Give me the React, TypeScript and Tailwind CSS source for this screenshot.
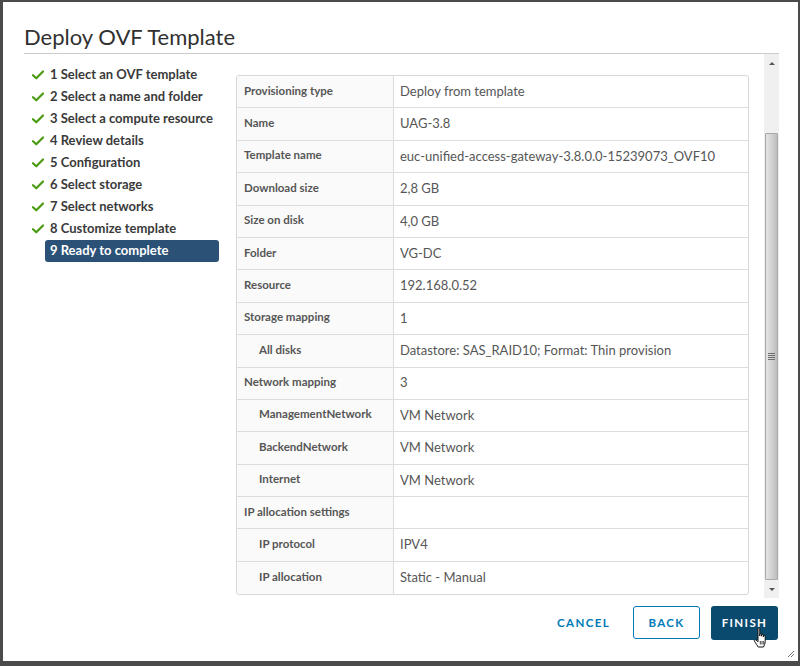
import React from 'react';

const steps = [
  '1 Select an OVF template',
  '2 Select a name and folder',
  '3 Select a compute resource',
  '4 Review details',
  '5 Configuration',
  '6 Select storage',
  '7 Select networks',
  '8 Customize template',
];

const rows: { label: string; value: string; indent?: boolean }[] = [
  { label: 'Provisioning type', value: 'Deploy from template' },
  { label: 'Name', value: 'UAG-3.8' },
  { label: 'Template name', value: 'euc-unified-access-gateway-3.8.0.0-15239073_OVF10' },
  { label: 'Download size', value: '2,8 GB' },
  { label: 'Size on disk', value: '4,0 GB' },
  { label: 'Folder', value: 'VG-DC' },
  { label: 'Resource', value: '192.168.0.52' },
  { label: 'Storage mapping', value: '1' },
  { label: 'All disks', value: 'Datastore: SAS_RAID10; Format: Thin provision', indent: true },
  { label: 'Network mapping', value: '3' },
  { label: 'ManagementNetwork', value: 'VM Network', indent: true },
  { label: 'BackendNetwork', value: 'VM Network', indent: true },
  { label: 'Internet', value: 'VM Network', indent: true },
  { label: 'IP allocation settings', value: '' },
  { label: 'IP protocol', value: 'IPV4', indent: true },
  { label: 'IP allocation', value: 'Static - Manual', indent: true },
];

function Check() {
  return (
    <svg width="12" height="10" viewBox="0 0 12 10" className="shrink-0">
      <path d="M1 5.2 L4.3 8.3 L11 1.5" fill="none" stroke="#4a9a12" strokeWidth="2.2" strokeLinecap="round" strokeLinejoin="round" />
    </svg>
  );
}

function HandCursor() {
  return (
    <svg width="18" height="22" viewBox="0 0 18 22" className="absolute left-[753px] top-[627px]">
      <path
        d="M5 1.5 C5 0.8 6.8 0.8 6.8 1.5 L6.8 9 L6.8 7.2 C6.8 6.4 8.6 6.4 8.6 7.2 L8.6 9.2 L8.6 8 C8.6 7.2 10.4 7.2 10.4 8 L10.4 9.8 L10.4 9 C10.4 8.2 12.2 8.2 12.2 9 L12.2 14.5 C12.2 17 11 18.5 10.5 20 L5.2 20 C4.4 18.4 2.6 16.2 1.4 14.2 C0.8 13.2 2 12.2 3 13 L5 14.8 Z"
        fill="#fff"
        stroke="#111"
        strokeWidth="1"
        strokeLinejoin="round"
      />
      <path d="M7.3 14 L7.3 17.5 M9 14 L9 17.5 M10.7 14 L10.7 17.5" stroke="#111" strokeWidth="0.8" />
    </svg>
  );
}

export default function App() {
  return (
    <div className="relative w-[800px] h-[666px] bg-[#4b4b4b] pt-[2px] pl-[3px] pr-[2px] pb-[5px]" style={{ fontFamily: 'Lato, "Noto Sans", sans-serif' }}>
      <div className="w-full h-full bg-white flex flex-col">
        {/* title */}
        <div className="pl-[21px] pr-[19px] shrink-0">
          <div className="h-[52px] border-b border-[#cccccc] flex items-end pb-[2px]">
            <h1 className="text-[22px] leading-[28px] text-[#313131] font-normal">Deploy OVF Template</h1>
          </div>
        </div>

        {/* body */}
        <div className="flex flex-1 min-h-0 pl-[21px] pr-[19px]">
          <div className="flex flex-1 min-h-0">
            <nav className="w-[212px] shrink-0 pt-[10px] pl-[8px]">
              {steps.map((s) => (
                <div key={s} className="h-[22px] flex items-center gap-[6px] text-[13px] font-bold text-[#3a3a3a]">
                  <Check />
                  <span>{s}</span>
                </div>
              ))}
              <div className="ml-[13px] w-[174px] h-[22px] rounded-[3px] bg-[#2b5176] flex items-center pl-[5px] text-[13px] font-bold text-white">
                9 Ready to complete
              </div>
            </nav>

            <div className="flex-1 pt-[21px] pr-[15px]">
              <div className="border border-[#d7d7d7] rounded-[3px] overflow-hidden">
                {rows.map((r, i) => (
                  <div key={r.label} className={`flex h-[32.4px] ${i < rows.length - 1 ? 'border-b border-[#dddddd]' : ''}`}>
                    <div className={`w-[157px] shrink-0 bg-[#fafafa] border-r border-[#dddddd] flex items-center pb-[3px] text-[11.5px] font-bold text-[#565656] ${r.indent ? 'pl-[22px]' : 'pl-[7px]'}`}>
                      {r.label}
                    </div>
                    <div className="flex-1 flex items-center pl-[6px] text-[13px] text-[#565656]">{r.value}</div>
                  </div>
                ))}
              </div>
            </div>
          </div>

          {/* scrollbar */}
          <div className="w-[15px] shrink-0 bg-[#f0f0f0] flex flex-col items-center">
            <div className="h-[16px] w-full flex items-center justify-center pt-[2px]">
              <div className="w-0 h-0 border-l-[3px] border-r-[3px] border-b-[3px] border-l-transparent border-r-transparent border-b-[#555]" />
            </div>
            <div className="h-[63px]" />
            <div className="w-[13px] flex-1 rounded-[1px] border border-[#a9a9a9] bg-gradient-to-r from-[#e3e3e3] via-[#d2d2d2] to-[#bdbdbd] flex items-center justify-center">
              <div className="flex flex-col gap-[1px]">
                <div className="w-[7px] h-[1px] bg-[#6f6f6f]" />
                <div className="w-[7px] h-[1px] bg-[#6f6f6f]" />
                <div className="w-[7px] h-[1px] bg-[#6f6f6f]" />
                <div className="w-[7px] h-[1px] bg-[#6f6f6f]" />
              </div>
            </div>
            <div className="h-[18px] w-full flex items-center justify-center">
              <div className="w-0 h-0 border-l-[3px] border-r-[3px] border-t-[3px] border-l-transparent border-r-transparent border-t-[#555]" />
            </div>
          </div>
        </div>

        {/* footer */}
        <div className="h-[63px] shrink-0 flex items-start justify-end gap-[11px] pr-[20px] pt-[8px] relative">
          <button className="h-[33px] px-[12px] text-[11.5px] font-bold tracking-[0.12em] text-[#0079b8]">CANCEL</button>
          <button className="h-[33px] w-[67px] rounded-[3px] border border-[#0079b8] text-[11.5px] font-bold tracking-[0.12em] text-[#0079b8]">BACK</button>
          <button className="h-[34px] w-[67px] rounded-[3px] bg-[#0b4a6f] text-[11.5px] font-bold tracking-[0.12em] text-white">FINISH</button>
          <svg width="8" height="8" viewBox="0 0 8 8" className="absolute right-[3px] bottom-[3px]">
            <path d="M7 1 L1 7 M7 4 L4 7" stroke="#777" strokeWidth="1" />
          </svg>
        </div>
      </div>
      <HandCursor />
    </div>
  );
}
